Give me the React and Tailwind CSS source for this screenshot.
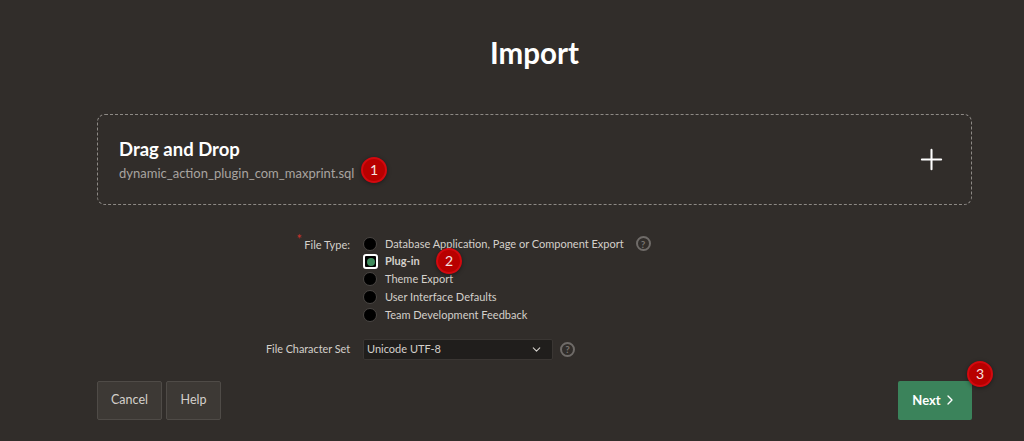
import { ChevronDown, ChevronRight, Plus } from "lucide-react";

const fileTypes = [
  "Database Application, Page or Component Export",
  "Plug-in",
  "Theme Export",
  "User Interface Defaults",
  "Team Development Feedback",
];

function Badge({ n, className }) {
  return (
    <span className={`absolute flex h-[26px] w-[26px] items-center justify-center rounded-full border-2 border-[#d3090f] bg-[#b80000] text-[14px] leading-none text-[#f5e3e0] shadow-[0_1px_4px_rgba(0,0,0,0.4)] ${className}`}>
      {n}
    </span>
  );
}

function HelpIcon() {
  return (
    <span className="flex h-[15px] w-[15px] items-center justify-center rounded-full border-2 border-[#6f6b68] text-[10px] font-bold leading-none text-[#77736f]">?</span>
  );
}

export default function App() {
  return (
    <div className="h-[441px] w-[1024px] overflow-hidden bg-[#312d2a] pl-[97px] pr-[52px] font-['Lato',sans-serif] text-[#d4d0cb]">
      <h1 className="pt-[33px] text-center text-[29.5px] font-bold leading-[40px] text-white">Import</h1>

      <div className="relative mt-[41px] flex h-[91px] items-center justify-between rounded-lg border border-dashed border-[#8d8985] pl-[21px] pr-[23px]">
        <div>
          <h2 className="text-[18.5px] font-bold leading-[24px] text-white">Drag and Drop</h2>
          <p className="mt-[3px] text-[13px] leading-[18px] text-[#a8a4a0]">dynamic_action_plugin_com_maxprint.sql</p>
        </div>
        <Plus className="h-[33px] w-[33px] text-white" strokeWidth={1.5} />
        <Badge n="1" className="left-[263px] top-[42px]" />
      </div>

      <div className="mt-[30px] flex">
        <div className="relative w-[253px] pt-[1px] text-right text-[11px] leading-[17px]">
          <span className="absolute right-[48px] top-[-4px] text-[13px] text-[#c9332c]">*</span>
          File Type:
        </div>
        <div className="relative ml-[13px] flex flex-col">
          {fileTypes.map((label, i) => (
            <label key={label} className="flex h-[17.75px] items-center gap-[8px] text-[11px]">
              {i === 1 ? (
                <span className="mr-[-1px] flex h-[15px] w-[15px] items-center justify-center rounded-[3px] border-2 border-white bg-black">
                  <span className="h-[8px] w-[8px] rounded-full bg-[#3f8a5c]" />
                </span>
              ) : (
                <span className="h-[14px] w-[14px] rounded-full border border-[#4a4643] bg-black" />
              )}
              <span className={i === 1 ? "font-bold" : ""}>{label}</span>
              {i === 0 && <span className="ml-[4px]"><HelpIcon /></span>}
            </label>
          ))}
          <Badge n="2" className="left-[73px] top-[13px]" />
        </div>
      </div>

      <div className="mt-[15px] flex items-center">
        <div className="w-[253px] text-right text-[10.8px]">File Character Set</div>
        <div className="ml-[13px] flex h-[21px] w-[190px] items-center justify-between rounded-[2px] border border-[#3a3633] bg-[#201e1c] pl-[3px] pr-[9px] text-[11px]">
          Unicode UTF-8
          <ChevronDown className="h-[13px] w-[13px]" />
        </div>
        <span className="ml-[7px]"><HelpIcon /></span>
      </div>

      <div className="mt-[21px] flex items-center justify-between">
        <div className="flex gap-[4px]">
          <button className="h-[39px] w-[65px] rounded-[2px] border border-[#4f4b47] bg-[#3d3935] text-[12.5px]">Cancel</button>
          <button className="h-[39px] w-[55px] rounded-[2px] border border-[#4f4b47] bg-[#3d3935] text-[12.5px]">Help</button>
        </div>
        <div className="relative">
          <button className="flex h-[39px] w-[74px] items-center justify-center gap-[1px] rounded-[2px] bg-[#3b835b] text-[13px] font-bold text-white">
            Next
            <ChevronRight className="h-[16px] w-[16px]" />
          </button>
          <Badge n="3" className="left-[69px] top-[-20px]" />
        </div>
      </div>
    </div>
  );
}
